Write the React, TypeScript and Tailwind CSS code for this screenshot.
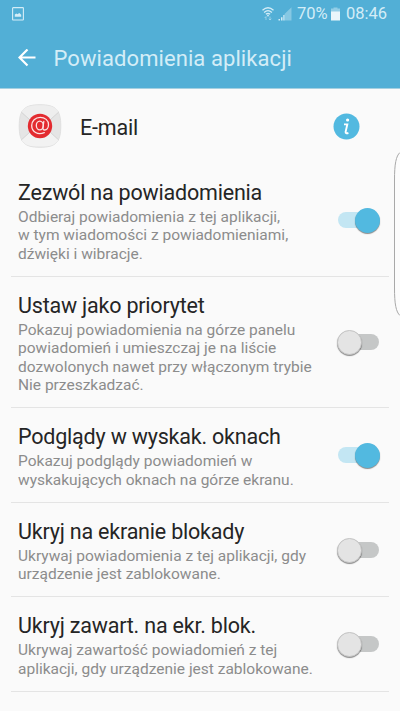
import { useState } from 'react';

const settings = [
  {
    id: 'allow',
    title: 'Zezwól na powiadomienia',
    lines: ['Odbieraj powiadomienia z tej aplikacji,', 'w tym wiadomości z powiadomieniami,', 'dźwięki i wibracje.'],
    on: true,
  },
  {
    id: 'priority',
    title: 'Ustaw jako priorytet',
    lines: [
      'Pokazuj powiadomienia na górze panelu',
      'powiadomień i umieszczaj je na liście',
      'dozwolonych nawet przy włączonym trybie',
      'Nie przeszkadzać.',
    ],
    on: false,
  },
  {
    id: 'popup',
    title: 'Podglądy w wyskak. oknach',
    lines: ['Pokazuj podglądy powiadomień w', 'wyskakujących oknach na górze ekranu.'],
    on: true,
  },
  {
    id: 'lockscreen',
    title: 'Ukryj na ekranie blokady',
    lines: ['Ukrywaj powiadomienia z tej aplikacji, gdy', 'urządzenie jest zablokowane.'],
    on: false,
  },
  {
    id: 'content',
    title: 'Ukryj zawart. na ekr. blok.',
    lines: ['Ukrywaj zawartość powiadomień z tej', 'aplikacji, gdy urządzenie jest zablokowane.'],
    on: false,
  },
];

function Toggle({ on, label, onClick }: { on: boolean; label: string; onClick: () => void }) {
  return (
    <button role="switch" aria-checked={on} aria-label={label} onClick={onClick} className="relative h-[26px] w-[44px] shrink-0">
      <span className={`absolute top-[4px] h-4 w-[40px] rounded-full ${on ? 'left-[1px] bg-[#c3e6f3]' : 'left-[2px] bg-[#c5c7c7]'}`} />
      <span
        className={`absolute top-0 h-[25px] w-[25px] rounded-full shadow-[0_1px_1px_rgba(0,0,0,0.45)] ${
          on ? 'left-[18px] bg-[#52b9e0]' : 'left-0 border border-[#c4c4c4] bg-[#e4e4e4]'
        }`}
      />
    </button>
  );
}

function StatusBar() {
  return (
    <div className="flex h-[27px] items-center justify-between pr-[13px] pl-3 text-[#d4edf7]">
      <svg width="12" height="14" viewBox="0 0 12 14" fill="none">
        <rect x="0.6" y="0.6" width="10.8" height="12.4" rx="0.6" stroke="currentColor" strokeWidth="1.1" />
        <path d="M2.8 9.8V7.6L4.3 6.6L5.4 7.3L7.3 6L9.2 7.8V9.8Z" fill="currentColor" />
      </svg>
      <div className="flex items-center">
        <svg width="12" height="14" viewBox="0 0 12 14" fill="none" stroke="currentColor" strokeWidth="1.3">
          <path d="M0.5 3.2Q6 -1.6 11.5 3.2M2.1 5.4Q6 1.9 9.9 5.4M3.9 7.3Q6 5.4 8.1 7.3" />
          <circle cx="6" cy="8.5" r="0.9" fill="currentColor" stroke="none" />
          <path d="M4 9.5V13M2.6 11L4 9.6M8 9.5V13M6.8 11.7L8 13L9.4 11.7" strokeWidth="1" opacity="0.5" />
        </svg>
        <svg className="ml-[4px]" width="14" height="14" viewBox="0 0 14 14" fill="currentColor">
          <path d="M6.5 7L13.5 0.3V13.5H6.5Z" opacity="0.4" />
          <path d="M0.5 12H2V13.5H0.5ZM3 10.2H4.5V13.5H3ZM5.3 8H6.5V13.5H5.3Z" />
        </svg>
        <span className="ml-[5px] w-[32px] text-[16.5px] leading-[27px] whitespace-nowrap">70%</span>
        <svg className="ml-[2px]" width="9" height="14" viewBox="0 0 9 14" fill="currentColor">
          <path d="M2.5 0.5H6.5V1.5H9V5H0V1.5H2.5Z" opacity="0.5" />
          <path d="M0 4.5H9V13.5H0Z" fill="#eaf6fb" />
        </svg>
        <span className="ml-[6px] text-[16.5px] leading-[27px]">08:46</span>
      </div>
    </div>
  );
}

function EmailIcon() {
  return (
    <svg width="44" height="44" viewBox="0 0 44 44">
      <path d="M22 0.7C38 0.7 42.8 6 42.8 22S38 43.3 22 43.3S1.2 38 1.2 22S6 0.7 22 0.7Z" fill="#e5e5e5" stroke="#dcdcdc" strokeWidth="0.8" />
      <path d="M3.5 8C7 2.5 12 1.3 22 1.3S37 2.5 40.5 8L22 25Z" fill="#eeeeee" />
      <path d="M3.5 36L22 19L40.5 36C37 41.5 32 42.5 22 42.5S7 41.5 3.5 36Z" fill="#f2f2f2" />
      <path d="M3.2 8L22 25L40.8 8M3.2 36L22 19L40.8 36" fill="none" stroke="#cfcfcf" strokeWidth="0.8" />
      <circle cx="22" cy="22" r="12.2" fill="#e32b30" />
      {/* at sign */}
      <g fill="none" stroke="#fbe3e3" strokeWidth="1.3" strokeLinecap="round">
        <path d="M26.3 28.6C19.8 31.6 13.7 27.8 13.7 21.6C13.7 17 17.3 13.3 22.2 13.3C27 13.3 30.5 16.4 30.5 20.6C30.5 24 28.6 26 26.7 26C25.2 26 24.8 25 25 23.5L25.8 17.5" />
        <ellipse cx="21.8" cy="21.5" rx="3.5" ry="4.3" />
      </g>
    </svg>
  );
}

export default function App() {
  const [values, setValues] = useState<Record<string, boolean>>(
    Object.fromEntries(settings.map((s) => [s.id, s.on]))
  );

  return (
    <div className="relative h-[711px] w-[400px] overflow-hidden bg-[#fafafa] font-['Roboto',sans-serif] text-[#252525]">
      <header className="h-[89px] border-b border-[#a5d0e1] bg-[#52afd6]">
        <StatusBar />
        <div className="flex h-[62px] items-center pl-[18px]">
          <svg width="18" height="18" viewBox="0 0 18 18" fill="none" stroke="#fff" strokeWidth="2.2">
            <path d="M17.5 8.5H1.5M9.5 0.5L1.5 8.5L9.5 16.5" />
          </svg>
          <h1 className="ml-[17.5px] text-[22px] tracking-[0.08px] text-[#d4edf7]">Powiadomienia aplikacji</h1>
        </div>
      </header>

      {/* App name */}
      <div className="flex h-[75px] items-center pr-[40px] pb-[1px] pl-[18px]">
        <EmailIcon />
        <span className="ml-[18px] pt-[4px] text-[21.5px] tracking-[-0.2px]">E-mail</span>
        <svg className="ml-auto" width="27" height="27" viewBox="0 0 27 27">
          <circle cx="13.5" cy="13.5" r="13" fill="#52b9e0" />
          <circle cx="14.6" cy="7" r="1.6" fill="#fff" />
          <path d="M11 11.4H14.3L12.6 18.8Q12.4 21 15.4 20" fill="none" stroke="#fff" strokeWidth="1.9" />
        </svg>
      </div>

      {/* Settings list */}
      <ul className="px-[11px]">
        {settings.map((s) => (
          <li key={s.id} className="flex items-center justify-between border-b border-[#e4e4e4] pt-[15px] pr-[8px] pb-[12.75px] pl-[7px]">
            <div className="whitespace-nowrap">
              <h2 className="text-[21.5px] leading-[27px] tracking-[-0.2px]">{s.title}</h2>
              <p className="mt-[2px] text-[15.5px] leading-[18.4px] text-[#8c8c8c]">
                {s.lines.map((line) => (
                  <span key={line} className="block">{line}</span>
                ))}
              </p>
            </div>
            <Toggle on={values[s.id]} label={s.title} onClick={() => setValues({ ...values, [s.id]: !values[s.id] })} />
          </li>
        ))}
      </ul>

      {/* Edge panel handle */}
      <svg className="absolute top-[150px] right-0" width="8" height="168" viewBox="0 0 8 168">
        <path d="M8 2.5C4 6 2.5 14 2.5 30V138C2.5 154 4 162 8 165.5Z" fill="#fcfcfc" />
        <path d="M8 2.5C4 6 2.5 14 2.5 30V138C2.5 154 4 162 8 165.5" fill="none" stroke="#a9a9a9" />
      </svg>
    </div>
  );
}
